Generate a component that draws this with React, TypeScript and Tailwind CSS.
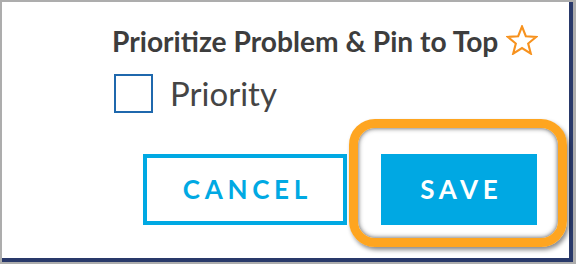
export default function App() {
  return (
    <div className="w-[576px] h-[264px] bg-[#adadad] pl-[2px] pt-[2px] overflow-hidden">
      <div className="w-[571px] h-[260px] bg-white border-r-4 border-b-4 border-[#29396a] pl-[110px] pr-[2px] pt-[24px] font-['Lato',sans-serif]">
        <div className="flex items-center h-[30px]">
          <span className="text-[28.2px] leading-[30px] font-bold text-[#3d3d3d]">Prioritize Problem &amp; Pin to Top</span>
          <svg className="ml-[8px] mt-[-2px]" width="32" height="30" viewBox="0 0 32 30" fill="none">
            <polygon
              points="16,1.5 19.82,11.24 30.27,11.86 22.18,18.51 24.82,28.64 16,23 7.18,28.64 9.82,18.51 1.73,11.86 12.18,11.24"
              stroke="#f7921e"
              strokeWidth="2.1"
              strokeLinejoin="miter"
            />
          </svg>
        </div>

        <label className="flex items-center mt-[18px] h-[39px] ml-[2px]">
          <span className="w-[39px] h-[39px] border-2 border-[#1f68ad] bg-white" />
          <span className="ml-[17px] text-[33px] leading-[39px] text-[#454545]">Priority</span>
        </label>

        <div className="flex justify-end items-start mt-[6px]">
          <button className="mt-[35px] w-[204px] h-[71px] border-4 border-[#00a9e3] text-[#00a9e3] text-[26px] font-bold tracking-[0.18em] pl-[0.18em]">
            CANCEL
          </button>
          <div className="ml-[2px] w-[218px] h-[128px] border-[9px] border-[#fea520] rounded-[26px] shadow-[inset_0_0_5px_rgba(0,0,0,0.7),2px_3px_4px_rgba(0,0,0,0.45)] pl-[23px] pt-[26px]">
            <button className="w-[156px] h-[71px] bg-[#00a8e3] text-white text-[26px] font-bold tracking-[0.18em] pl-[0.18em]">
              SAVE
            </button>
          </div>
        </div>
      </div>
    </div>
  )
}
